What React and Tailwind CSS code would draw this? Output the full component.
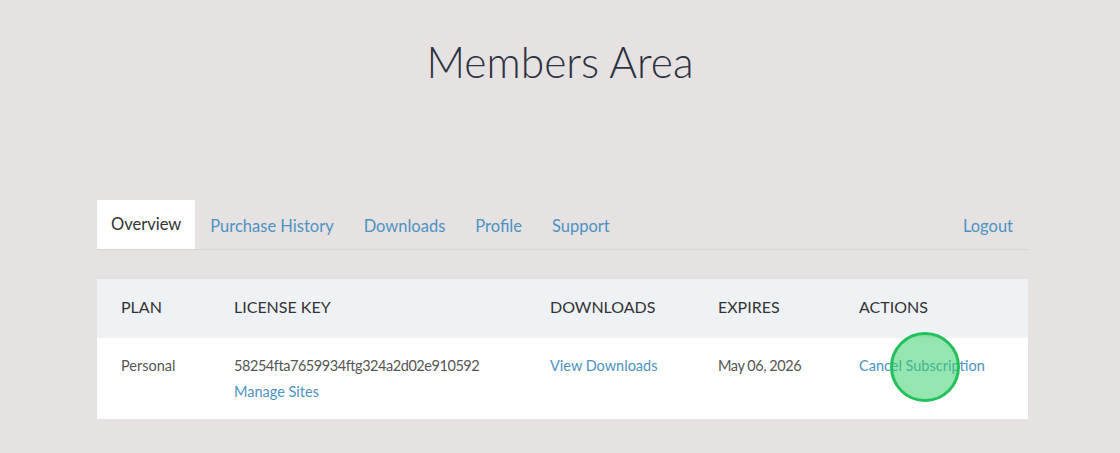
import React from 'react';

const tabs = ['Purchase History', 'Downloads', 'Profile', 'Support'];

export default function App() {
  return (
    <div className="min-h-[453px] w-full bg-[#e7e2e2] font-['Lato',sans-serif] text-[#333]">
      <h1 className="pt-[30px] text-center text-[42.5px] font-light leading-[64px] text-[#2b3240]">
        Members Area
      </h1>

      <div className="ml-[97px] mt-[106px] w-[931px]">
        {/* tabs */}
        <div className="flex items-stretch border-b border-[#d9d6d6]">
          <div className="flex h-[49px] items-center bg-white px-[14px] text-[16.5px] text-[#333]">Overview</div>
          {tabs.map(t => (
            <a key={t} className="flex items-center px-[15px] pt-[3px] text-[16.5px] text-[#4b93c2]">{t}</a>
          ))}
          <a className="ml-auto flex items-center px-[15px] pt-[3px] text-[16.5px] text-[#4b93c2]">Logout</a>
        </div>

        {/* table */}
        <div className="relative mt-[29px]">
          <div className="grid h-[59px] grid-cols-[113px_316px_168px_141px_1fr] items-center bg-[#eef2f5] pb-[3px] text-[16px] uppercase text-[#333]">
            <div className="pl-[24px]">Plan</div>
            <div className="pl-[24px]">License Key</div>
            <div className="pl-[24px]">Downloads</div>
            <div className="pl-[24px]">Expires</div>
            <div className="pl-[24px]">Actions</div>
          </div>
          <div className="grid h-[81px] grid-cols-[113px_316px_168px_141px_1fr] bg-white pt-[15px] text-[14.5px] leading-[26px] text-[#555]">
            <div className="pl-[24px]">Personal</div>
            <div className="pl-[24px]">
              <div className="tracking-[-0.45px]">58254fta7659934ftg324a2d02e910592</div>
              <a className="text-[#4b93c2]">Manage Sites</a>
            </div>
            <div className="pl-[24px]"><a className="text-[#4b93c2]">View Downloads</a></div>
            <div className="pl-[24px] tracking-[-0.45px]">May 06, 2026</div>
            <div className="pl-[24px]"><a className="text-[#4b93c2]">Cancel Subscription</a></div>
          </div>
          {/* click indicator */}
          <div className="pointer-events-none absolute left-[793px] top-[53px] h-[70px] w-[70px] rounded-full border-[3px] border-[#22c05a] bg-[#3ccf6e]/55" />
        </div>
      </div>
    </div>
  );
}
